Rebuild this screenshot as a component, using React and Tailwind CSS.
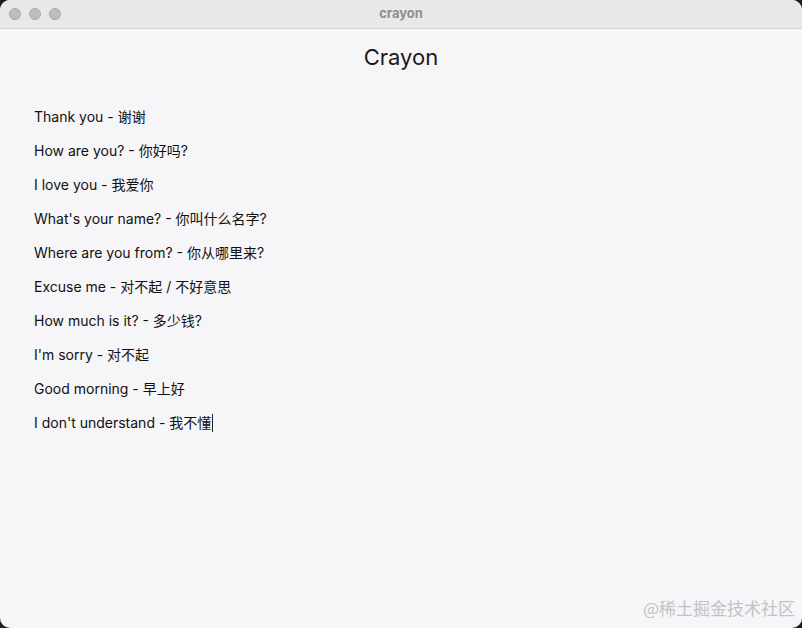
const phrases = [
  'Thank you - 谢谢',
  'How are you? - 你好吗?',
  'I love you - 我爱你',
  "What's your name? - 你叫什么名字?",
  'Where are you from? - 你从哪里来?',
  'Excuse me - 对不起 / 不好意思',
  'How much is it? - 多少钱?',
  "I'm sorry - 对不起",
  'Good morning - 早上好',
  "I don't understand - 我不懂",
]

const font = { fontFamily: 'Inter, "Noto Sans CJK SC", sans-serif' }

export default function App() {
  return (
    <div className="w-[802px] h-[628px] bg-[#1c1f14] overflow-hidden" style={font}>
      <div className="relative w-full h-full bg-[#f6f5f7] rounded-[10px] flex flex-col overflow-hidden">
        <div className="relative h-[29px] shrink-0 bg-[#e8e8e8] border-b border-[#d4d4d4] flex items-center justify-center">
          <div className="absolute left-[9px] top-[8px] flex gap-[8px]">
            <span className="w-[12px] h-[12px] rounded-full bg-[#bdbdbd] border border-[#a9a9a9]" />
            <span className="w-[12px] h-[12px] rounded-full bg-[#bdbdbd] border border-[#a9a9a9]" />
            <span className="w-[12px] h-[12px] rounded-full bg-[#bdbdbd] border border-[#a9a9a9]" />
          </div>
          <span className="text-[13px] font-bold text-[#8e8e8e]">crayon</span>
        </div>

        <h1 className="mt-[14px] text-center text-[22px] leading-[28px] text-[#1a1a1a]">Crayon</h1>

        <ul className="mt-[36px] ml-[34px] flex flex-col gap-[14px] text-[14px] leading-[20px] text-[#111]">
          {phrases.map((p, i) => (
            <li key={i} className="flex items-center">
              {p}
              {i === phrases.length - 1 && <span className="ml-[1px] w-[1px] h-[18px] bg-[#222]" />}
            </li>
          ))}
        </ul>

        <div className="absolute right-[7px] bottom-[8px] text-[17px] text-[#c4c2c6]" style={{ fontFamily: '"Noto Sans CJK SC", sans-serif' }}>
          @稀土掘金技术社区
        </div>
      </div>
    </div>
  )
}
